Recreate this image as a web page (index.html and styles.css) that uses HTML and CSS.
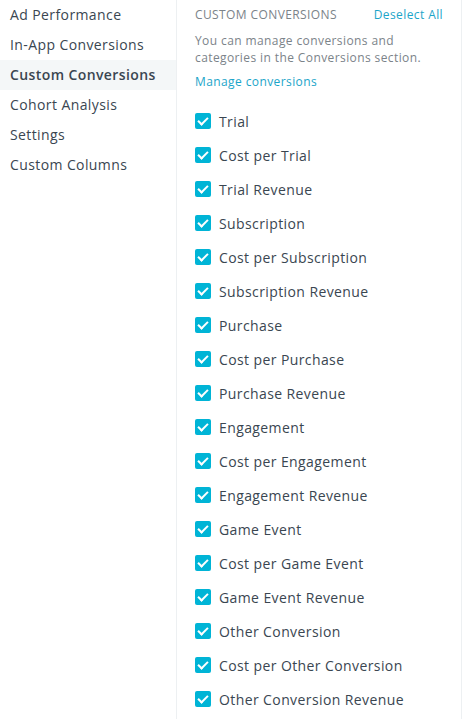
FILE: index.html
```html
<!DOCTYPE html>
<html lang="en">

<head>
    <meta charset="UTF-8">
    <meta name="viewport" content="width=device-width, initial-scale=1.0">
    <title>Custom Conversions</title>

    <link rel="stylesheet" href="styles.css">
</head>

<body>
    <div class="layout">
        <nav class="sidebar">
            <a class="nav-item">Ad Performance</a>
            <a class="nav-item">In-App Conversions</a>
            <a class="nav-item active">Custom Conversions</a>
            <a class="nav-item">Cohort Analysis</a>
            <a class="nav-item">Settings</a>
            <a class="nav-item">Custom Columns</a>
        </nav>

        <section class="panel">
            <div class="panel-head">
                <span class="panel-title">Custom Conversions</span>
                <a class="link">Deselect All</a>
            </div>
            <p class="hint">You can manage conversions and categories in the Conversions section.</p>
            <a class="link manage">Manage conversions</a>

            <ul class="options">
                <li><span class="check"></span>Trial</li>
                <li><span class="check"></span>Cost per Trial</li>
                <li><span class="check"></span>Trial Revenue</li>
                <li><span class="check"></span>Subscription</li>
                <li><span class="check"></span>Cost per Subscription</li>
                <li><span class="check"></span>Subscription Revenue</li>
                <li><span class="check"></span>Purchase</li>
                <li><span class="check"></span>Cost per Purchase</li>
                <li><span class="check"></span>Purchase Revenue</li>
                <li><span class="check"></span>Engagement</li>
                <li><span class="check"></span>Cost per Engagement</li>
                <li><span class="check"></span>Engagement Revenue</li>
                <li><span class="check"></span>Game Event</li>
                <li><span class="check"></span>Cost per Game Event</li>
                <li><span class="check"></span>Game Event Revenue</li>
                <li><span class="check"></span>Other Conversion</li>
                <li><span class="check"></span>Cost per Other Conversion</li>
                <li><span class="check"></span>Other Conversion Revenue</li>
            </ul>
        </section>
    </div>
</body>

</html>
```

FILE: styles.css
```css
body {
    margin: 0;
    font-family: 'Open Sans', 'Liberation Sans', sans-serif;
    letter-spacing: 0.4px;
    background-color: #fff;
    color: #3a4651;
}

.layout {
    display: flex;
    min-height: 719px;
}

.sidebar {
    width: 176px;
    border-right: 1px solid #edf0f2;
    display: flex;
    flex-direction: column;
}

.nav-item {
    height: 30px;
    line-height: 30px;
    padding-left: 10px;
    font-size: 14px;
    color: #3a4651;
}

.nav-item.active {
    background-color: #f4f7f8;
    font-weight: 600;
}

.panel {
    flex: 1;
    padding: 0 18px 0 18px;
    border-right: 1px solid #edf0f2;
}

.panel-head {
    display: flex;
    justify-content: space-between;
    align-items: center;
    height: 28px;
}

.panel-title {
    text-transform: uppercase;
    font-size: 12px;
    color: #7b8389;
}

.link {
    color: #1ba5c9;
    font-size: 12px;
}

.hint {
    margin: 4px 0 0;
    font-size: 12px;
    line-height: 17px;
    color: #7b8389;
}

.manage {
    display: block;
    margin-top: 7px;
}

.options {
    list-style: none;
    margin: 14px 0 0;
    padding: 0;
}

.options li {
    display: flex;
    align-items: center;
    height: 34px;
    font-size: 14px;
}

.check {
    width: 16px;
    height: 16px;
    border-radius: 2px;
    background-color: #00b4d6;
    margin-right: 8px;
    position: relative;
}

.check::after {
    content: "";
    position: absolute;
    left: 5px;
    top: 2px;
    width: 4px;
    height: 8px;
    border: solid #fff;
    border-width: 0 2.5px 2.5px 0;
    transform: rotate(45deg);
}
```
